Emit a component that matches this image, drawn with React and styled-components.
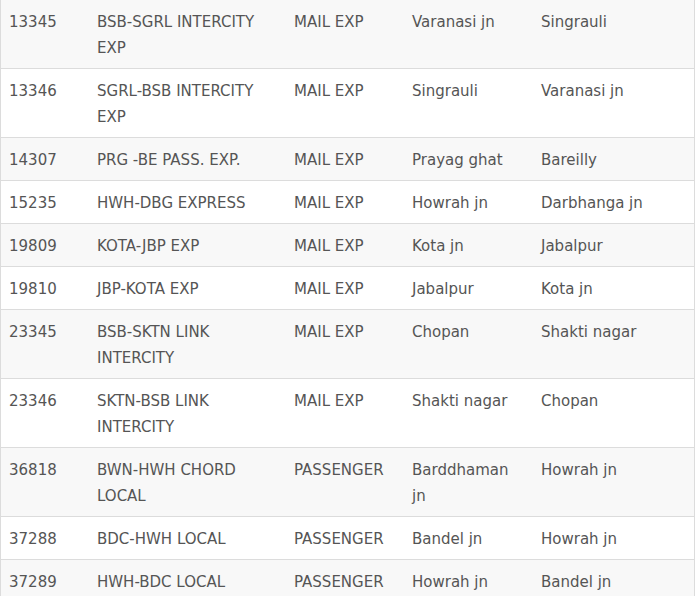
import styled, { createGlobalStyle } from "styled-components";

const GlobalStyle = createGlobalStyle`
  body {
    margin: 0;
    background: #fff;
    font-family: "DejaVu Sans", Verdana, sans-serif;
  }
`;

const trains = [
  ["13345", "BSB-SGRL INTERCITY EXP", "MAIL EXP", "Varanasi jn", "Singrauli"],
  ["13346", "SGRL-BSB INTERCITY EXP", "MAIL EXP", "Singrauli", "Varanasi jn"],
  ["14307", "PRG -BE PASS. EXP.", "MAIL EXP", "Prayag ghat", "Bareilly"],
  ["15235", "HWH-DBG EXPRESS", "MAIL EXP", "Howrah jn", "Darbhanga jn"],
  ["19809", "KOTA-JBP EXP", "MAIL EXP", "Kota jn", "Jabalpur"],
  ["19810", "JBP-KOTA EXP", "MAIL EXP", "Jabalpur", "Kota jn"],
  ["23345", "BSB-SKTN LINK INTERCITY", "MAIL EXP", "Chopan", "Shakti nagar"],
  ["23346", "SKTN-BSB LINK INTERCITY", "MAIL EXP", "Shakti nagar", "Chopan"],
  ["36818", "BWN-HWH CHORD LOCAL", "PASSENGER", "Barddhaman jn", "Howrah jn"],
  ["37288", "BDC-HWH LOCAL", "PASSENGER", "Bandel jn", "Howrah jn"],
  ["37289", "HWH-BDC LOCAL", "PASSENGER", "Howrah jn", "Bandel jn"],
];

const Table = styled.div`
  width: 695px;
  box-sizing: border-box;
  border-left: 1px solid #dcdcdc;
  border-right: 1px solid #dcdcdc;
`;

const Row = styled.div`
  display: grid;
  grid-template-columns: 88px 197px 118px 129px 1fr;
  background: ${(p) => (p.$striped ? "#f8f8f8" : "#fff")};
  border-bottom: 1px solid #dcdcdc;
`;

const Cell = styled.div`
  padding: 9px 8px 7px;
  font-size: 15px;
  line-height: 26px;
  color: #555;
`;

export default function App() {
  return (
    <>
      <GlobalStyle />
      <Table>
        {trains.map((t, i) => (
          <Row key={t[0]} $striped={i % 2 === 0}>
            {t.map((v, j) => (
              <Cell key={j}>{v}</Cell>
            ))}
          </Row>
        ))}
      </Table>
    </>
  );
}
